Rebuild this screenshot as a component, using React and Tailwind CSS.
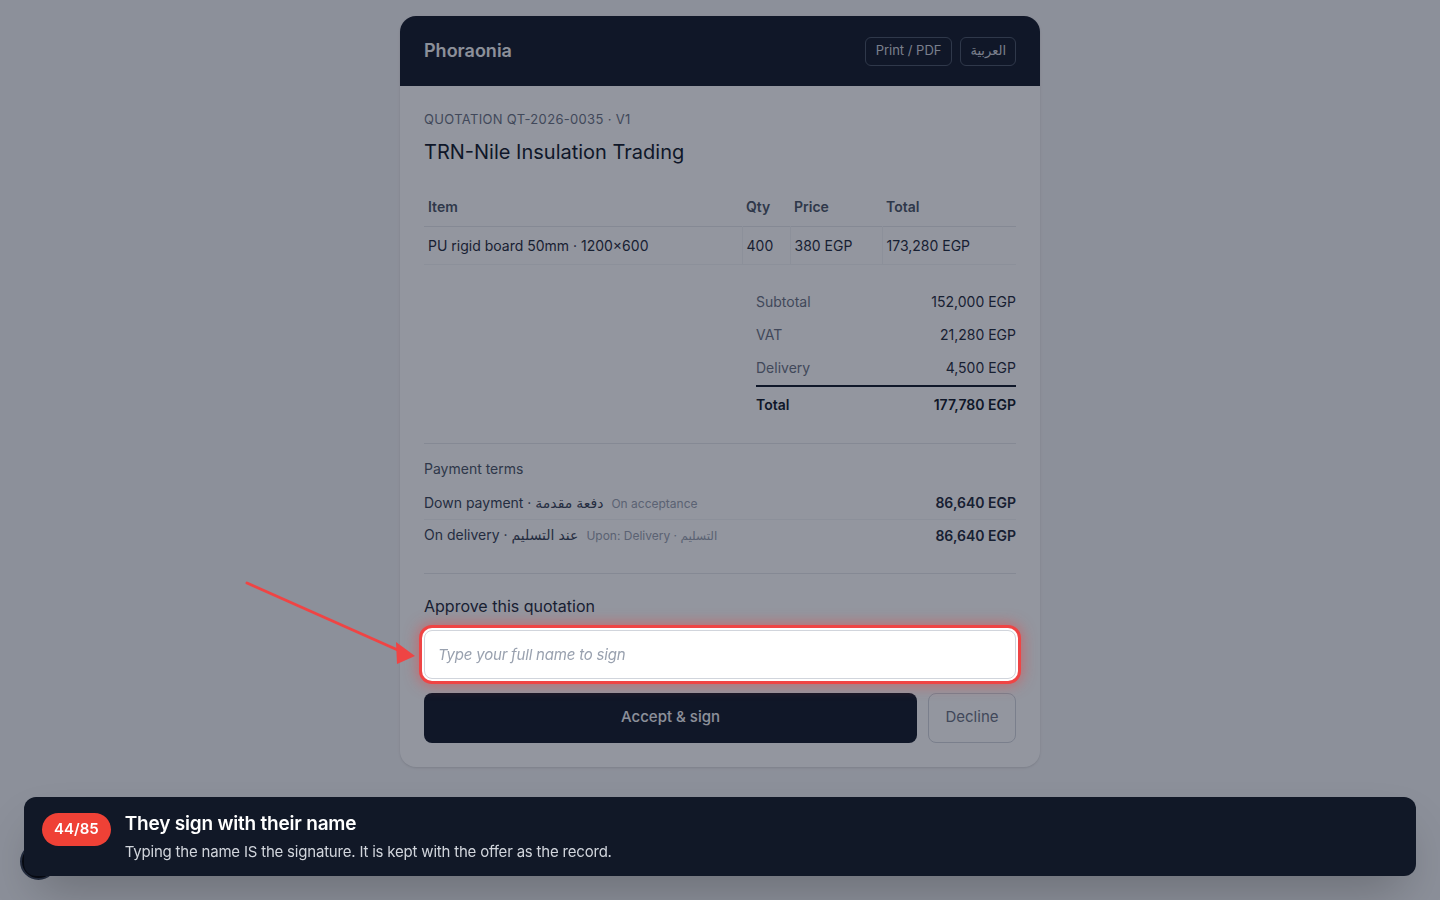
import React from "react";

const font = { fontFamily: "Inter, 'Noto Sans', 'DejaVu Sans', sans-serif" };

function Header() {
  return (
    <div className="flex h-[70px] items-center justify-between rounded-t-2xl bg-[#111827] px-6">
      <div className="text-[18px] font-semibold leading-[26px] text-gray-100">Phoraonia</div>
      <div className="flex items-center gap-2">
        <button className="h-[29px] rounded-md border border-gray-600 px-[10px] text-[13px] text-gray-300">
          Print / PDF
        </button>
        <button className="h-[29px] rounded-md border border-gray-600 px-[9px] text-[13px] text-gray-300">
          العربية
        </button>
      </div>
    </div>
  );
}

function ItemsTable() {
  return (
    <table className="mt-[22px] w-full border-collapse text-[14px]">
      <thead>
        <tr className="border-b border-gray-200 text-left text-gray-600">
          <th className="h-[38px] px-1 font-semibold">Item</th>
          <th className="w-[48px] px-1 font-semibold">Qty</th>
          <th className="w-[92px] px-1 font-semibold">Price</th>
          <th className="w-[134px] px-1 font-semibold">Total</th>
        </tr>
      </thead>
      <tbody>
        <tr className="border-b border-gray-100 text-gray-800">
          <td className="h-[38px] border-r border-gray-100 px-1">PU rigid board 50mm · 1200×600</td>
          <td className="border-r border-gray-100 px-1">400</td>
          <td className="border-r border-gray-100 px-1">380 EGP</td>
          <td className="px-1">173,280 EGP</td>
        </tr>
      </tbody>
    </table>
  );
}

function Totals() {
  return (
    <div className="ml-auto mt-[21px] w-[260px] text-[14px] leading-[20px]">
      <div className="flex h-[33px] items-center justify-between">
        <span className="text-gray-500">Subtotal</span>
        <span className="text-gray-800">152,000 EGP</span>
      </div>
      <div className="flex h-[33px] items-center justify-between">
        <span className="text-gray-500">VAT</span>
        <span className="text-gray-800">21,280 EGP</span>
      </div>
      <div className="flex h-[35px] items-center justify-between border-b-2 border-gray-900">
        <span className="text-gray-500">Delivery</span>
        <span className="text-gray-800">4,500 EGP</span>
      </div>
      <div className="flex h-[36px] items-center justify-between font-semibold text-gray-900">
        <span>Total</span>
        <span>177,780 EGP</span>
      </div>
    </div>
  );
}

function PaymentTerms() {
  return (
    <div className="mt-[20px] border-t border-gray-200 pt-[15px] pb-[21px] text-[14px] leading-[20px]">
      <div className="text-gray-600">Payment terms</div>
      <div className="mt-[9px] flex h-[32px] items-center justify-between border-b border-gray-100">
        <div className="text-gray-700">
          Down payment · دفعة مقدمة
          <span className="ml-2 text-[12px] text-gray-400">On acceptance</span>
        </div>
        <span className="font-semibold text-gray-800">86,640 EGP</span>
      </div>
      <div className="flex h-[32px] items-center justify-between">
        <div className="text-gray-700">
          On delivery · عند التسليم
          <span className="ml-2 text-[12px] text-gray-400">Upon: Delivery · التسليم</span>
        </div>
        <span className="font-semibold text-gray-800">86,640 EGP</span>
      </div>
    </div>
  );
}

function Approve() {
  return (
    <div className="border-t border-gray-200 pt-[20px]">
      <div className="text-[16px] leading-[24px] text-gray-800">Approve this quotation</div>
      <input
        placeholder="Type your full name to sign"
        className="relative z-20 mt-[12px] h-[49px] w-full rounded-lg border border-gray-300 bg-white px-[13px] text-[15px] italic tracking-[-0.2px] text-gray-800 placeholder:text-gray-400 shadow-[0_0_0_2px_#ffffff,0_0_0_5px_#ef4444,0_0_14px_6px_rgba(239,68,68,0.55)] outline-none"
      />
      <div className="mt-[14px] flex gap-[11px]">
        <button className="h-[50px] flex-1 rounded-lg bg-[#111827] text-[15px] font-medium text-gray-100">
          Accept &amp; sign
        </button>
        <button className="h-[50px] w-[88px] rounded-lg border border-gray-300 text-[15px] text-gray-500">
          Decline
        </button>
      </div>
    </div>
  );
}

export default function App() {
  return (
    <div style={font} className="min-h-screen bg-gray-100 pt-4">
      <div className="mx-auto w-[640px] rounded-2xl bg-white shadow-sm">
        <Header />
        <div className="px-6 pt-[23px] pb-6">
          <div className="text-[13px] leading-[20px] uppercase tracking-wide text-gray-500">
            QUOTATION QT-2026-0035 · V1
          </div>
          <div className="mt-[9px] text-[20px] leading-[28px] text-gray-900">TRN-Nile Insulation Trading</div>
          <ItemsTable />
          <Totals />
          <PaymentTerms />
          <Approve />
        </div>
      </div>

      {/* dev badge in the corner */}
      <div className="fixed bottom-[20px] left-[20px] z-0 flex h-[37px] w-[37px] items-center justify-center rounded-full border-2 border-gray-700 bg-black text-[13px] font-bold text-gray-500">
        N
      </div>

      {/* dimming layer */}
      <div className="fixed inset-0 z-10 bg-[rgba(15,23,42,0.45)]" />

      {/* pointer arrow */}
      <svg className="pointer-events-none fixed left-0 top-0 z-20" width="1440" height="900">
        <line x1="247" y1="583" x2="400" y2="651" stroke="#ef4444" strokeWidth="3" strokeLinecap="round" />
        <polygon points="415,656 396,642 397,664" fill="#ef4444" />
      </svg>

      {/* tour step banner */}
      <div className="fixed bottom-[24px] left-[24px] right-[24px] z-30 flex h-[79px] items-start gap-[14px] rounded-xl bg-[#111827] px-[18px] pt-[15px] shadow-2xl">
        <div className="mt-[1px] flex h-[33px] items-center rounded-full bg-[#ef4136] px-[12px] text-[15px] font-semibold text-white">
          44/85
        </div>
        <div>
          <div className="text-[19px] font-semibold leading-[24px] tracking-[-0.2px] text-white">
            They sign with their name
          </div>
          <div className="mt-[5px] text-[15px] tracking-[-0.2px] text-gray-300">
            Typing the name IS the signature. It is kept with the offer as the record.
          </div>
        </div>
      </div>
    </div>
  );
}
